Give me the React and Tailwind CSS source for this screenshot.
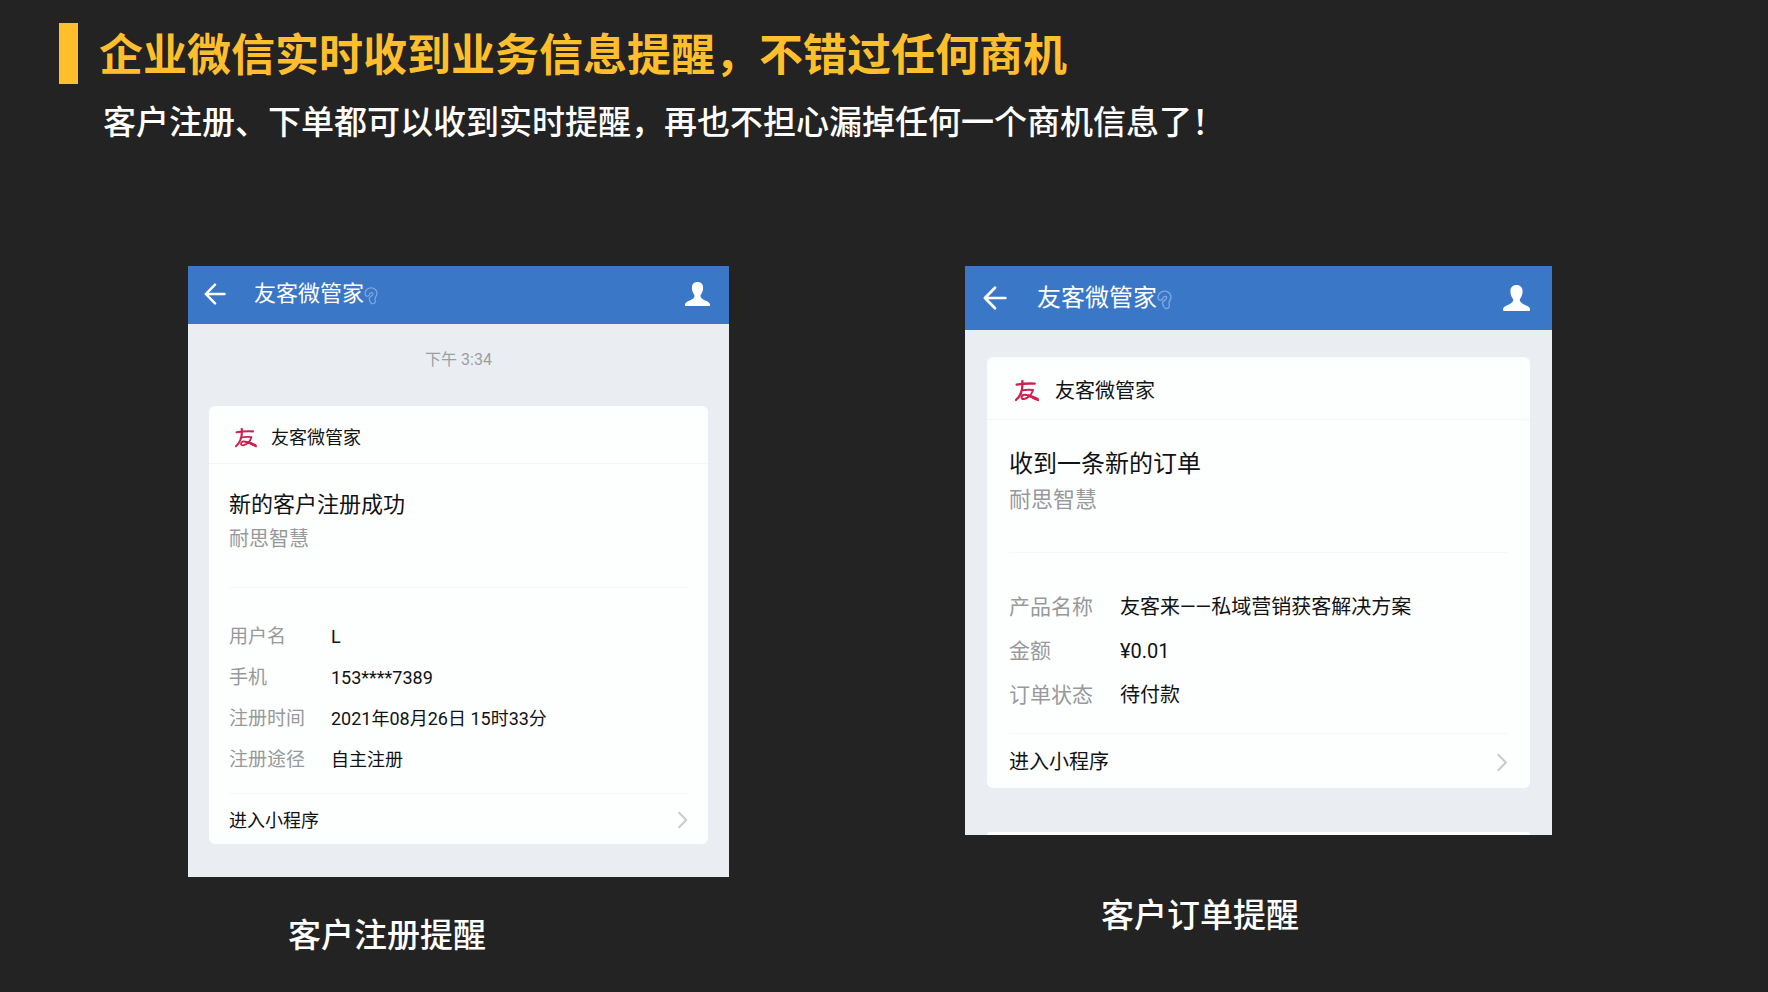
import React from 'react';
import clsx from 'clsx';

const registerFields = [
  { label: '用户名', value: 'L' },
  { label: '手机', value: '153****7389' },
  { label: '注册时间', value: '2021年08月26日 15时33分' },
  { label: '注册途径', value: '自主注册' },
];

const orderFields = [
  { label: '产品名称', value: '友客来——私域营销获客解决方案' },
  { label: '金额', value: '¥0.01' },
  { label: '订单状态', value: '待付款' },
];

// The order screen was captured at a slightly larger scale
const sizes = {
  md: {
    bar: 'h-[58px] pl-4 pr-[19px] pb-[3px]',
    back: 'h-[22px] w-[22px]',
    name: 'ml-7 text-[22px]',
    ear: 'h-[18px] w-[14px]',
    person: 'h-6 w-[25px]',
    body: 'px-[21px]',
    head: 'h-[58px] pl-[26px]',
    logo: 'h-5 w-[22px]',
    brand: 'ml-3.5 text-[18px]',
    content: 'px-5',
    intro: 'pt-6 pb-[31px] leading-[34px]',
    title: 'text-[22px]',
    subtitle: 'text-[20px]',
    fields: 'pt-7 pb-[13px] leading-[41px]',
    label: 'w-[102px] text-[19px]',
    value: 'text-[18px]',
    footer: 'h-[50px] text-[18px]',
    chevron: 'h-[18px] w-[10px]',
  },
  lg: {
    bar: 'h-16 pl-[18px] pr-[22px] pb-px',
    back: 'h-6 w-6',
    name: 'ml-[30px] text-[24px]',
    ear: 'h-5 w-[15px]',
    person: 'h-[26px] w-[27px]',
    body: 'px-[22px]',
    head: 'h-[63px] pl-7',
    logo: 'h-[22px] w-6',
    brand: 'ml-4 text-[20px]',
    content: 'px-[22px]',
    intro: 'pt-[26px] pb-[34px] leading-[36px]',
    title: 'text-[24px]',
    subtitle: 'text-[22px]',
    fields: 'pt-8 pb-4 leading-[44px]',
    label: 'w-[111px] text-[21px]',
    value: 'text-[20px]',
    footer: 'h-[54px] text-[20px]',
    chevron: 'h-[19px] w-[11px]',
  },
};

const BackIcon = ({ className }) => (
  <svg viewBox="0 0 22 22" className={className} fill="none" stroke="currentColor" strokeWidth="2.5" strokeLinecap="round" strokeLinejoin="round">
    <path d="M20.5 11H2M11 1.6 1.8 11l9.2 9.4" />
  </svg>
);

const EarIcon = ({ className }) => (
  <svg viewBox="-2 -2 45 59" className={className} fill="none" stroke="currentColor" strokeWidth="4" strokeLinecap="round" strokeLinejoin="round">
    <path d="M15 24C11 31 1 29 1 20 1 9 10 1 21 1s19 8 19 18c0 8-6 11-6 17s4 12-2 15c-6 4-12 1-14-4-1-5-5-8-3-13 2-4 12-7 12-13 0-7-10-6-12 3Z" />
  </svg>
);

const PersonIcon = ({ className }) => (
  <svg viewBox="0 0 80 77" className={className} fill="currentColor">
    <path d="M40 0c11 0 18 7 18 18 0 9-2 14-5 19-3 4-4 7-3 10 2 6 9 9 17 13 8 3 13 7 13 12v3c0 1-1 2-2 2H2c-1 0-2-1-2-2v-3c0-5 5-9 13-12 8-4 15-7 17-13 1-3 0-6-3-10-3-5-5-10-5-19C22 7 29 0 40 0Z" />
  </svg>
);

const BrandLogo = ({ className }) => (
  <svg viewBox="0 0 72 66" className={className} fill="none" stroke="#cf2150" strokeLinecap="round" strokeLinejoin="round">
    <path d="M5 14c18-3 36-4 54-3" strokeWidth="7" />
    <path d="M22 3c2 22-2 42-19 57" strokeWidth="7" />
    <path d="M23 31c9-2 19-2 31-1-3 11-13 24-27 27-9 2-10-9-2-12 8-2 14 1 22 5" strokeWidth="6" />
    <path d="M40 45c10 2 20 6 29 11l1 6C59 59 49 54 40 45Z" strokeWidth="4" fill="#cf2150" />
  </svg>
);

const ChevronIcon = ({ className }) => (
  <svg viewBox="0 0 10 18" className={className} fill="none" stroke="#c9cccd" strokeWidth="2" strokeLinecap="round" strokeLinejoin="round">
    <path d="m1.2 1.8 7 7.2-7 7.2" />
  </svg>
);

const NoticeCard = ({ s, title, fields }) => (
  <article className="rounded-md bg-[#fdfefe] text-[#101214]">
    <div className={clsx('flex items-center border-b border-[#f3f5f6] pt-1.5', s.head)}>
      <BrandLogo className={s.logo} />
      <span className={s.brand}>友客微管家</span>
    </div>
    <div className={s.content}>
      <div className={clsx('border-b border-[#f6f8f8]', s.intro)}>
        <h3 className={s.title}>{title}</h3>
        <p className={clsx('text-[#97999b]', s.subtitle)}>耐思智慧</p>
      </div>
      <dl className={clsx('border-b border-[#f6f8f8]', s.fields)}>
        {fields.map((field) => (
          <div key={field.label} className="flex">
            <dt className={clsx('shrink-0 text-[#97999b]', s.label)}>{field.label}</dt>
            <dd className={clsx('whitespace-nowrap', s.value)}>{field.value}</dd>
          </div>
        ))}
      </dl>
      <a href="#" className={clsx('flex items-center justify-between pt-0.5', s.footer)}>
        进入小程序
        <ChevronIcon className={s.chevron} />
      </a>
    </div>
  </article>
);

const PhoneScreen = ({ size, children }) => {
  const s = sizes[size];

  return (
    <div className="overflow-hidden bg-[#eaeef2]">
      <div className={clsx('flex items-center bg-[#3a77c6] text-white', s.bar)}>
        <button type="button" aria-label="返回">
          <BackIcon className={s.back} />
        </button>
        <h2 className={s.name}>友客微管家</h2>
        <EarIcon className={clsx('mt-1 text-[#7ea9e2]', s.ear)} />
        <button type="button" aria-label="联系人" className="ml-auto">
          <PersonIcon className={s.person} />
        </button>
      </div>
      <div className={s.body}>{children}</div>
    </div>
  );
};

const App = () => {
  return (
    <div className="min-h-screen bg-[#232323] pt-[23px] pb-6 font-[Roboto,'Noto_Sans_CJK_SC',sans-serif]">
      {/* Heading */}
      <header className="pl-[59px] text-white">
        <div className="flex items-center gap-[21px]">
          <span className="h-[61px] w-[19px] bg-[#ffbf2d]" />
          <h1 className="pt-1.5 text-[44px] leading-[55px] font-bold text-[#ffbf2d]">
            企业微信实时收到业务信息提醒，不错过任何商机
          </h1>
        </div>
        <p className="mt-[15px] pl-11 text-[33px] leading-[48px] font-medium">
          客户注册、下单都可以收到实时提醒，再也不担心漏掉任何一个商机信息了！
        </p>
      </header>

      {/* Screens */}
      <main className="mt-[119px] grid grid-cols-[541fr_587fr] items-start gap-x-[236px] pr-[216px] pl-[188px]">
        <figure>
          <PhoneScreen size="md">
            <p className="pt-6 pb-[34px] text-center text-base leading-6 text-[#9b9fa1]">下午 3:34</p>
            <NoticeCard s={sizes.md} title="新的客户注册成功" fields={registerFields} />
            <div className="h-[33px]" />
          </PhoneScreen>
          <figcaption className="mt-[35px] pl-[100px] text-[33px] leading-[48px] font-medium text-white">客户注册提醒</figcaption>
        </figure>

        <figure>
          <PhoneScreen size="lg">
            <div className="h-[27px]" />
            <NoticeCard s={sizes.lg} title="收到一条新的订单" fields={orderFields} />
            {/* Top edge of the next message */}
            <div className="mt-11 h-[3px] rounded-t-md bg-[#fdfefe]" />
          </PhoneScreen>
          <figcaption className="mt-[57px] pl-[136px] text-[33px] leading-[48px] font-medium text-white">客户订单提醒</figcaption>
        </figure>
      </main>
    </div>
  );
};

export default App;
